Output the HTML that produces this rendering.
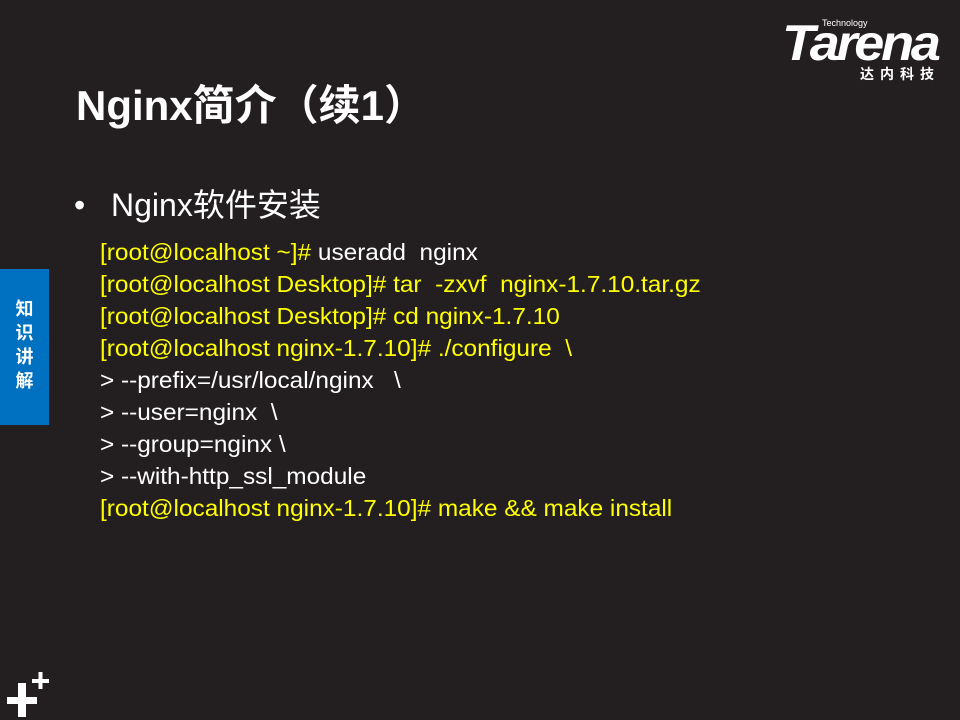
<!DOCTYPE html>
<html><head><meta charset="utf-8"><style>
html,body{margin:0;padding:0}
body{width:960px;height:720px;background:#231f20;position:relative;overflow:hidden;font-family:"Liberation Sans","Noto Sans CJK SC",sans-serif;color:#fff}
.t{position:absolute;left:76px;top:72px;font-size:42px;font-weight:bold;white-space:nowrap}
.b{position:absolute;left:74px;top:180px;font-size:32px;white-space:nowrap}
.b span{display:inline-block;width:37px}
.code{position:absolute;left:100px;top:236px;font-size:23px;line-height:32px;white-space:pre;transform:scaleX(1.06);transform-origin:0 0}
.y{color:#ffff00}
.tab{position:absolute;left:0;top:269px;width:49px;height:156px;background:#0070c0;color:#fff;font-weight:bold;font-size:18px;line-height:24px;text-align:center;padding-top:28px;box-sizing:border-box}
.logo{position:absolute;left:782px;top:20px;width:165px}
.logo .tw{font-size:50px;font-weight:bold;font-style:italic;letter-spacing:-3px;line-height:46px;transform:scaleX(1.08);transform-origin:0 0}
.logo .tech{position:absolute;left:40px;top:-2px;font-size:9px}
.logo .cn{position:absolute;left:78px;top:44px;font-size:14px;font-weight:bold;letter-spacing:6px}
</style></head><body>
<div class="logo"><div class="tech">Technology</div><div class="tw">Tarena</div><div class="cn">达内科技</div></div>
<div class="t">Nginx简介（续1）</div>
<div class="b"><span>•</span>Nginx软件安装</div>
<div class="tab">知<br>识<br>讲<br>解</div>
<div class="code"><span class="y">[root@localhost ~]# </span>useradd  nginx
<span class="y">[root@localhost Desktop]# tar  -zxvf  nginx-1.7.10.tar.gz</span>
<span class="y">[root@localhost Desktop]# cd nginx-1.7.10</span>
<span class="y">[root@localhost nginx-1.7.10]# ./configure  \</span>
&gt; --prefix=/usr/local/nginx   \
&gt; --user=nginx  \
&gt; --group=nginx \
&gt; --with-http_ssl_module
<span class="y">[root@localhost nginx-1.7.10]# make &amp;&amp; make install</span></div>
<svg style="position:absolute;left:0;top:660px" width="60" height="60">
<path d="M7 37h30v7H7zM18 23h8v34h-8z" fill="#fff"/>
<path d="M32 19h17v4H32zM38.5 12h4v17h-4z" fill="#fff"/>
</svg>
</body></html>
